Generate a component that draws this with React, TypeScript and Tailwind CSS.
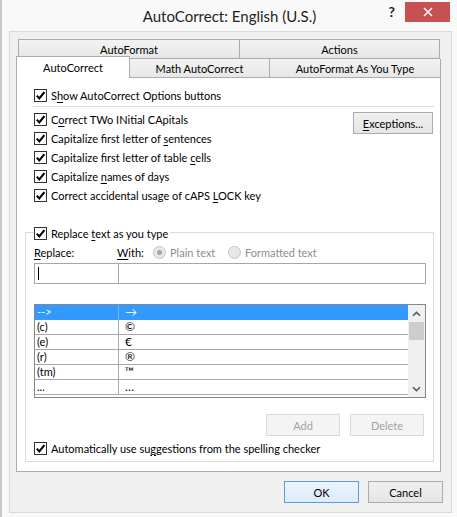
import React from "react";

const Check = () => (
  <span className="w-[13px] h-[13px] border border-[#333333] bg-white flex items-center justify-center shrink-0">
    <svg width="11" height="11" viewBox="0 0 11 11">
      <path d="M1.8 5.6 L4.3 8.4 L9.4 2.2" stroke="#000" strokeWidth="2.1" fill="none" />
    </svg>
  </span>
);

const U = ({ children }: { children: React.ReactNode }) => (
  <span className="underline decoration-1 underline-offset-[2px]">{children}</span>
);

const CheckRow = ({ children }: { children: React.ReactNode }) => (
  <div className="flex items-center h-[19px] gap-[4px] leading-[15px]">
    <Check />
    <span className="whitespace-nowrap">{children}</span>
  </div>
);

const Radio = ({ on }: { on?: boolean }) => (
  <span className="w-[13px] h-[13px] rounded-full border border-[#c4c4c4] bg-[#e8e8e8] flex items-center justify-center shrink-0">
    {on ? <span className="w-[5px] h-[5px] rounded-full bg-[#a4a4a4]" /> : null}
  </span>
);

const rows: [string, string][] = [
  ["-->", "→"],
  ["(c)", "©"],
  ["(e)", "€"],
  ["(r)", "®"],
  ["(tm)", "™"],
  ["...", "…"],
];

const Chevron = ({ down }: { down?: boolean }) => (
  <svg width="9" height="6" viewBox="0 0 9 6">
    <path
      d={down ? "M1 1.2 L4.5 4.6 L8 1.2" : "M1 4.8 L4.5 1.4 L8 4.8"}
      stroke="#5a5a5a"
      strokeWidth="1.6"
      fill="none"
    />
  </svg>
);

export default function App() {
  return (
    <div className="w-[457px] h-[517px] bg-[#f9f9f9] font-['Lato',sans-serif] text-[11px] text-black overflow-hidden flex flex-col border-l-2 border-[#c9c9c9]">
      {/* title bar */}
      <div className="h-[31px] relative flex items-start justify-end shrink-0">
        <div className="absolute inset-x-0 top-[5px] text-center text-[15px] leading-[22px] text-[#1e1e1e]">
          AutoCorrect: English (U.S.)
        </div>
        <div className="relative mt-[3px] mr-[10px] text-[14px] leading-[18px] font-bold text-[#222]">?</div>
        <div className="relative w-[45px] h-[20px] mt-[2px] mr-[7px] bg-[#c75050] flex items-center justify-center">
          <svg width="10" height="10" viewBox="0 0 10 10">
            <path d="M1 1 L9 9 M9 1 L1 9" stroke="#fff" strokeWidth="1.5" />
          </svg>
        </div>
      </div>

      {/* client area */}
      <div className="ml-[7px] w-[443px] h-[482px] border border-[#dadada] bg-[#f0f0f0] flex flex-col shrink-0">
        <div className="ml-[6px] mt-[7px] flex flex-col">
          {/* tab row 1 */}
          <div className="flex ml-[2px] h-[20px]">
            <div className="w-[222px] h-[20px] border border-[#acacac] bg-linear-to-b from-[#f3f3f3] to-[#e7e7e7] flex items-center justify-center leading-[15px]">
              AutoFormat
            </div>
            <div className="w-[200px] h-[20px] border border-l-0 border-[#acacac] bg-linear-to-b from-[#f3f3f3] to-[#e7e7e7] flex items-center justify-center leading-[15px]">
              Actions
            </div>
          </div>
          {/* tab row 2 */}
          <div className="flex items-end h-[21px] -mt-[3px]">
            <div className="relative z-10 w-[114px] h-[22px] -mb-[1px] border border-b-0 border-[#acacac] bg-white flex items-center justify-center leading-[15px] pb-[1px]">
              AutoCorrect
            </div>
            <div className="w-[140px] h-[18px] border-r border-[#acacac] bg-linear-to-b from-[#f3f3f3] to-[#e7e7e7] flex items-center justify-center leading-[15px]">
              Math AutoCorrect
            </div>
            <div className="w-[171px] h-[18px] border-r border-[#acacac] bg-linear-to-b from-[#f3f3f3] to-[#e7e7e7] flex items-center justify-center leading-[15px]">
              AutoFormat As You Type
            </div>
          </div>

          {/* panel */}
          <div className="w-[425px] h-[395px] border border-[#acacac] bg-white flex flex-col pl-[8px] pr-[6px] pt-[8px]">
            <div className="pl-[9px]">
              <CheckRow>
                S<U>h</U>ow AutoCorrect Options buttons
              </CheckRow>
            </div>
            <div className="ml-[8px] mt-[1px] h-px bg-[#dcdcdc]" />
            <div className="flex mt-[3px] pl-[9px]">
              <div className="flex flex-col flex-1">
                <CheckRow>
                  C<U>o</U>rrect TWo INitial CApitals
                </CheckRow>
                <CheckRow>
                  Capitalize first letter of <U>s</U>entences
                </CheckRow>
                <CheckRow>
                  Capitalize first letter of table <U>c</U>ells
                </CheckRow>
                <CheckRow>
                  Capitalize <U>n</U>ames of days
                </CheckRow>
                <CheckRow>
                  Correct accidental usage of cAPS <U>L</U>OCK key
                </CheckRow>
              </div>
              <div className="mt-[2px] mr-px w-[80px] h-[22px] border border-[#acacac] bg-linear-to-b from-[#f0f0f0] to-[#e5e5e5] flex items-center justify-center leading-[15px]">
                <U>E</U>xceptions...
              </div>
            </div>

            {/* group box */}
            <div className="mt-[27px] h-[230px] border border-[#dcdcdc] flex flex-col pl-[8px] pr-[7px]">
              <div className="-mt-[8px] self-start bg-white pr-[2px] h-[16px] flex items-center">
                <CheckRow>
                  Replace <U>t</U>ext as you type
                </CheckRow>
              </div>
              <div className="mt-[3px] h-[16px] flex items-center leading-[15px]">
                <span className="w-[83px]">
                  <U>R</U>eplace:
                </span>
                <span className="w-[36px]">
                  <U>W</U>ith:
                </span>
                <Radio on />
                <span className="ml-[4px] w-[58px] text-[#8d8d8d]">Plain text</span>
                <Radio />
                <span className="ml-[4px] text-[#8d8d8d]">Formatted text</span>
              </div>
              <div className="mt-[3px] h-[21px] flex">
                <div className="w-[85px] h-[21px] border border-[#a6a6a6] bg-white flex items-center">
                  <span className="ml-[3px] w-px h-[13px] bg-black" />
                </div>
                <div className="flex-1 h-[21px] border border-l-0 border-[#a6a6a6] bg-white" />
              </div>

              {/* list */}
              <div className="mt-[20px] h-[94px] border border-[#828790] bg-white flex">
                <div className="flex-1 flex flex-col">
                  {rows.map(([a, b], i) => (
                    <div
                      key={i}
                      className={
                        i === 0
                          ? "h-[15px] flex bg-[#3399ff] text-white leading-[14px]"
                          : "h-[15px] flex border-b border-[#a9a9a9] leading-[14px]"
                      }
                    >
                      <div
                        className={
                          i === 0
                            ? "w-[84px] border-r border-[#6fb6ff] pl-[2px]"
                            : "w-[84px] border-r border-[#a9a9a9] pl-[2px]"
                        }
                      >
                        {a}
                      </div>
                      <div className="flex-1 pl-[6px] text-[12px]">{b}</div>
                    </div>
                  ))}
                </div>
                <div className="w-[17px] bg-[#f0f0f0] flex flex-col">
                  <div className="h-[17px] flex items-center justify-center">
                    <Chevron />
                  </div>
                  <div className="h-[18px] mx-px bg-[#cdcdcd]" />
                  <div className="flex-1" />
                  <div className="h-[17px] flex items-center justify-center">
                    <Chevron down />
                  </div>
                </div>
              </div>

              <div className="mt-[16px] flex justify-end gap-[10px] mr-[2px]">
                <div className="w-[74px] h-[22px] border border-[#d9d9d9] bg-[#f4f4f4] text-[#a3a3a3] flex items-center justify-center leading-[15px]">
                  Add
                </div>
                <div className="w-[74px] h-[22px] border border-[#d9d9d9] bg-[#f4f4f4] text-[#a3a3a3] flex items-center justify-center leading-[15px]">
                  Delete
                </div>
              </div>
              <div className="mt-[3px] h-[18px] flex items-center">
                <CheckRow>
                  Automatically use su<U>g</U>gestions from the spelling checker
                </CheckRow>
              </div>
            </div>
          </div>
        </div>

        {/* dialog buttons */}
        <div className="mt-[9px] flex justify-end gap-[9px] pr-[8px]">
          <div className="w-[75px] h-[22px] border border-[#5a9bd8] bg-linear-to-b from-[#ecf4fc] to-[#dcecfc] flex items-center justify-center leading-[15px]">
            OK
          </div>
          <div className="w-[75px] h-[22px] border border-[#acacac] bg-linear-to-b from-[#f0f0f0] to-[#e5e5e5] flex items-center justify-center leading-[15px]">
            Cancel
          </div>
        </div>
      </div>
    </div>
  );
}
